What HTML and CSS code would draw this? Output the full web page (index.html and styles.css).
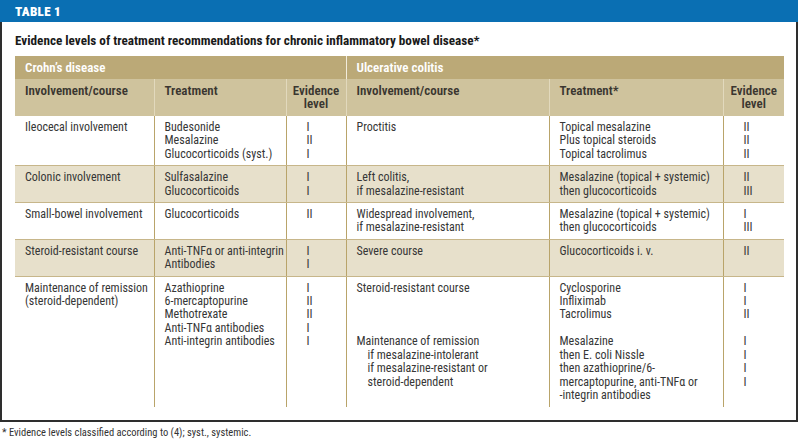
FILE: index.html
```html
<!DOCTYPE html>
<html>
<head>
<meta charset="utf-8">
<link rel="stylesheet" href="styles.css">
</head>
<body>
<div class="page">
  <div class="bar">TABLE 1</div>
  <div class="box">
    <div class="title">Evidence levels of treatment recommendations for chronic inflammatory bowel disease*</div>
    <table class="tbl">
      <colgroup>
        <col class="c1"><col class="c2"><col class="c3"><col class="c4"><col class="c5"><col class="c6">
      </colgroup>
      <thead>
        <tr class="group">
          <th colspan="3" class="g-left">Crohn’s disease</th>
          <th colspan="3">Ulcerative colitis</th>
        </tr>
        <tr class="heads">
          <th>Involvement/course</th>
          <th>Treatment</th>
          <th class="ev">Evidence<br>level</th>
          <th>Involvement/course</th>
          <th>Treatment*</th>
          <th class="ev">Evidence<br>level</th>
        </tr>
      </thead>
      <tbody>
        <tr>
          <td>Ileocecal involvement</td>
          <td>Budesonide<br>Mesalazine<br>Glucocorticoids (syst.)</td>
          <td class="lv">I<br>II<br>I</td>
          <td>Proctitis</td>
          <td>Topical mesalazine<br>Plus topical steroids<br>Topical tacrolimus</td>
          <td class="lv">II<br>II<br>II</td>
        </tr>
        <tr class="alt">
          <td>Colonic involvement</td>
          <td>Sulfasalazine<br>Glucocorticoids</td>
          <td class="lv">I<br>I</td>
          <td>Left colitis,<br>if mesalazine-resistant</td>
          <td>Mesalazine (topical + systemic)<br>then glucocorticoids</td>
          <td class="lv">II<br>III</td>
        </tr>
        <tr>
          <td>Small-bowel involvement</td>
          <td>Glucocorticoids</td>
          <td class="lv">II</td>
          <td>Widespread involvement,<br>if mesalazine-resistant</td>
          <td>Mesalazine (topical + systemic)<br>then glucocorticoids</td>
          <td class="lv">I<br>III</td>
        </tr>
        <tr class="alt">
          <td>Steroid-resistant course</td>
          <td>Anti-TNFα or anti-integrin<br>Antibodies</td>
          <td class="lv">I<br>I</td>
          <td>Severe course</td>
          <td>Glucocorticoids i. v.</td>
          <td class="lv">II</td>
        </tr>
        <tr class="last">
          <td>Maintenance of remission<br>(steroid-dependent)</td>
          <td>Azathioprine<br>6-mercaptopurine<br>Methotrexate<br>Anti-TNFα antibodies<br>Anti-integrin antibodies</td>
          <td class="lv">I<br>II<br>II<br>I<br>I</td>
          <td>Steroid-resistant course<br><br><br><br>Maintenance of remission<br><span class="ind">if mesalazine-intolerant</span><br><span class="ind">if mesalazine-resistant or</span><br><span class="ind">steroid-dependent</span></td>
          <td>Cyclosporine<br>Infliximab<br>Tacrolimus<br><br>Mesalazine<br>then E. coli Nissle<br>then azathioprine/6-<br>mercaptopurine, anti-TNFα or<br>-integrin antibodies</td>
          <td class="lv">I<br>I<br>II<br><br>I<br>I<br>I<br>I</td>
        </tr>
      </tbody>
    </table>
  </div>
  <div class="foot">* Evidence levels classified according to (4); syst., systemic.</div>
</div>
</body>
</html>
```

FILE: styles.css
```css
html, body {
  margin: 0;
  padding: 0;
  background: #ffffff;
}

body {
  font-family: "Roboto Condensed", "DejaVu Sans Condensed", "Liberation Sans Narrow", Roboto, sans-serif;
  font-stretch: 80%;
  color: #333333;
}

.page {
  width: 798px;
}

.bar {
  height: 22px;
  background: #0a6fb3;
  color: #ffffff;
  font-weight: 900;
  font-size: 13px;
  letter-spacing: 0.3px;
  line-height: 23px;
  padding-left: 15px;
}

.box {
  border-left: 2px solid #2e2e2e;
  border-right: 2px solid #2e2e2e;
  border-bottom: 2px solid #2e2e2e;
  padding: 11px 12px 13px 13px;
}

.title {
  font-weight: bold;
  font-size: 13.2px;
  line-height: 16px;
  color: #1a1a1a;
  margin-bottom: 7px;
}

.tbl {
  border-collapse: collapse;
  table-layout: fixed;
  width: 769px;
  font-size: 12px;
  line-height: 13.4px;
}

.c1 { width: 139px; }
.c2 { width: 132px; }
.c3 { width: 60px; }
.c4 { width: 203px; }
.c5 { width: 174px; }
.c6 { width: 61px; }

.tbl th {
  text-align: left;
  vertical-align: top;
  font-weight: 600;
  font-size: 13px;
  padding: 0 10px;
}

.group th {
  background: #bba977;
  color: #ffffff;
  height: 23px;
  padding-top: 5px;
  padding-bottom: 0;
  box-sizing: border-box;
  line-height: 14px;
}

.group .g-left {
  border-right: 1px solid #f2ecdc;
}

.heads th {
  background: #cfc39d;
  color: #3a3630;
  height: 37px;
  box-sizing: border-box;
  padding-top: 5px;
  border-right: 1px solid #e2d9bd;
}

.heads th:last-child {
  border-right: none;
}

.heads th.ev {
  text-align: center;
  padding: 5px 0 0;
}

.tbl td {
  vertical-align: top;
  padding: 5px 10px 4px;
  border-right: 1px solid #b9a46a;
  border-bottom: 1px solid #c7b68a;
  white-space: nowrap;
  color: #363636;
}

.tbl td:last-child {
  border-right: none;
}

.tbl td.lv {
  padding-left: 20px;
}

.tbl tr.alt td {
  background: #e7e0cb;
}

.tbl tr.last td {
  border-bottom: none;
  padding-bottom: 5px;
}

.ind {
  padding-left: 11px;
}

.foot {
  font-size: 10.5px;
  line-height: 14px;
  padding: 4px 0 0 2px;
  color: #333333;
}
```
